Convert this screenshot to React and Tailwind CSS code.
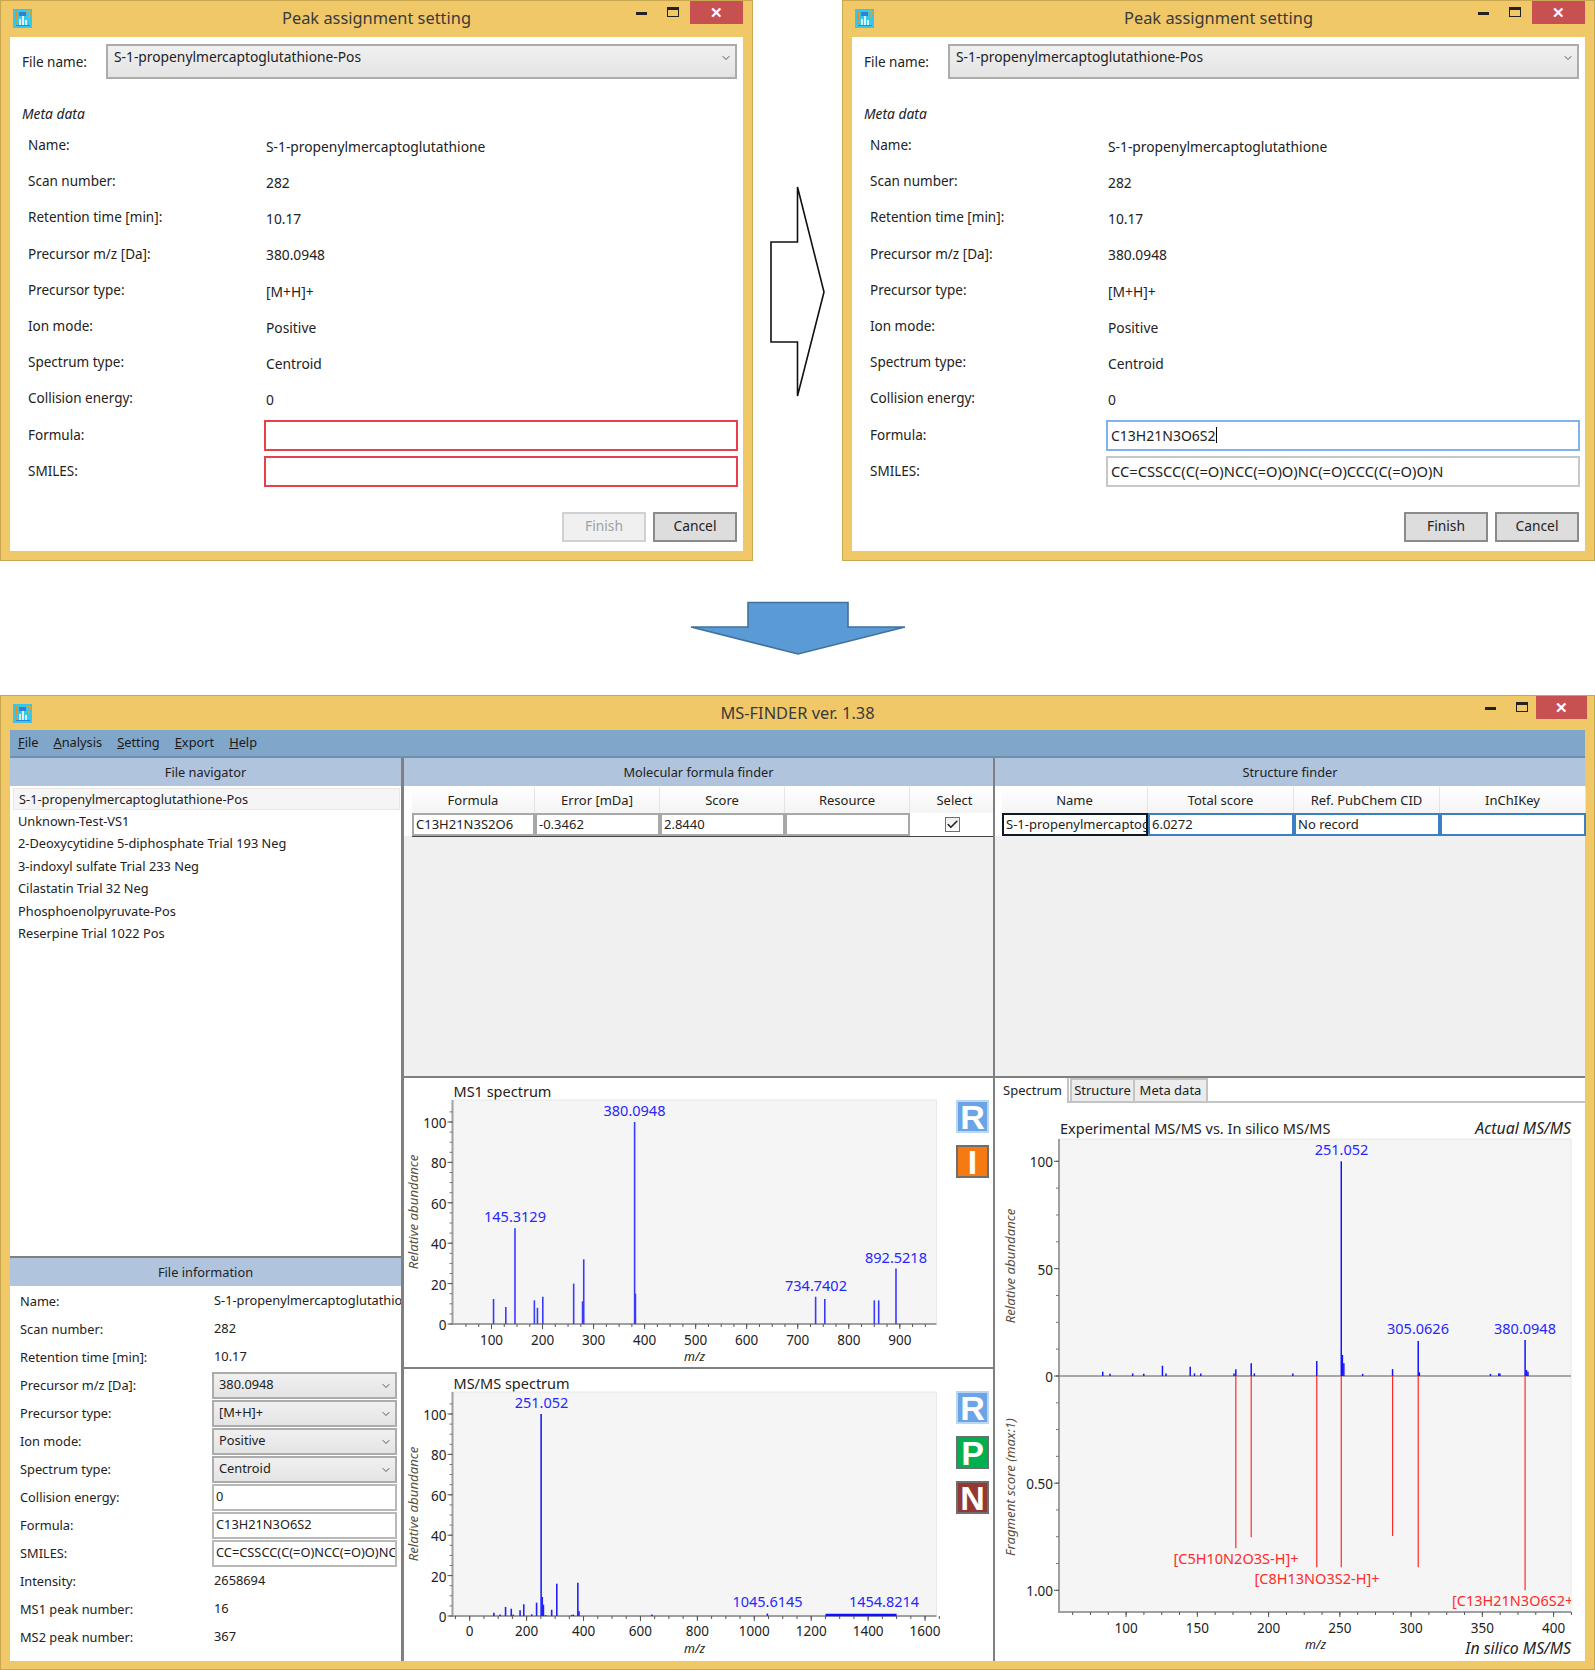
import { Check, ChevronDown } from "lucide-react";

const range = (from, to, step) => {
  const out = [];
  for (let v = from; v <= to + 1e-6; v += step) out.push(v);
  return out;
};

const MS1_PEAKS = [
  [104, 12.4], [128, 8.4], [146, 47.4], [184, 11.7], [190, 8], [200.5, 13.5], [261, 20], [278.4, 11.2],
  [280.7, 32], [380.4, 100], [382, 15], [735, 13.5], [753, 12.4], [850, 11.7], [858.6, 11.7], [892.5, 27.5],
];

const MS2_PEAKS = [
  [85, 1.6], [107, 0.7], [126, 4.5], [146, 3.6], [153, 0.7], [177, 2.8], [190, 5.8], [218, 0.8], [235, 6.6],
  [251, 100], [255, 9.4], [259, 5.6], [267, 0.4], [288, 3.1], [306, 16], [358, 0.5], [364, 0.7], [380, 16.4],
  [384, 2.3], [640, 0.7], [1046, 1.2],
];

const ACTUAL_PEAKS = [
  [83.6, 2], [88.7, 1], [104.6, 1.2], [112.4, 1], [125.5, 4.8], [128, 1.2], [145, 4.3], [148, 1.2], [152.4, 1.2],
  [175.7, 1.2], [177, 3.2], [187.8, 5.9], [190, 1.2], [217, 1.2], [233.8, 7], [251, 100], [251.8, 9.8], [252.8, 5.9],
  [266, 1], [287, 3.2], [305, 16.3], [305.8, 1.7], [355.7, 1], [361.5, 1.2], [362.3, 1.2], [380, 16.8], [381, 2.8], [382, 2],
];

const INSILICO_PEAKS = [
  [177, 0.804], [187.8, 0.753], [233.8, 0.893], [251, 0.893], [287, 0.747], [305, 0.893], [380, 1],
];

const META = [
  ["Name:", "S-1-propenylmercaptoglutathione"],
  ["Scan number:", "282"],
  ["Retention time [min]:", "10.17"],
  ["Precursor m/z [Da]:", "380.0948"],
  ["Precursor type:", "[M+H]+"],
  ["Ion mode:", "Positive"],
  ["Spectrum type:", "Centroid"],
  ["Collision energy:", "0"],
];

const FILES = [
  "S-1-propenylmercaptoglutathione-Pos",
  "Unknown-Test-VS1",
  "2-Deoxycytidine 5-diphosphate Trial 193 Neg",
  "3-indoxyl sulfate Trial 233 Neg",
  "Cilastatin Trial 32 Neg",
  "Phosphoenolpyruvate-Pos",
  "Reserpine Trial 1022 Pos",
];

function AppIcon() {
  return (
    <svg width="19" height="19" viewBox="0 0 19 19" className="shrink-0">
      <rect width="19" height="19" fill="#35c8ea" />
      <rect x="6" y="3" width="7" height="4" fill="#2f80d8" />
      <rect x="6" y="10" width="2" height="6" fill="#d8f4fb" />
      <rect x="9" y="7" width="2" height="9" fill="#d8f4fb" />
      <rect x="12" y="11" width="2" height="5" fill="#d8f4fb" />
      <rect x="2" y="2" width="2" height="9" fill="#f08a1c" />
      <rect x="2" y="13" width="2" height="2" fill="#f08a1c" />
      <path d="M14 4 Q14 2 16 2 Q18 3 17 5 L16 7 V9" fill="none" stroke="#f0a01c" strokeWidth="1.4" />
      <rect x="3" y="16" width="14" height="1" fill="#2f80d8" />
    </svg>
  );
}

function TitleBar({ title, height, main }) {
  return (
    <div className={`grid grid-cols-[1fr_auto_1fr] items-start shrink-0 ${height}`}>
      <div className="pl-3 pt-2">
        <AppIcon />
      </div>
      <div className="pt-[5px] text-[16.4px] leading-[24px] text-[#3a3a3a] whitespace-nowrap">{title}</div>
      <div className={`flex justify-end items-start ${main ? "pr-[7px]" : "pr-[9px]"}`}>
        <div className="w-[14px] h-[24px] flex items-center">
          <div className="w-[11px] h-[3px] bg-[#222]" />
        </div>
        <div className="w-[30px] h-[22px] flex justify-end pt-[6px] pr-[1px]">
          <div className="w-[12px] h-[10px] border border-[#222] border-t-[3px]" />
        </div>
        <div
          className={`h-[23px] bg-[#c75050] flex items-center justify-center text-white text-[15px] font-bold leading-none ${
            main ? "w-[51px] ml-[7px]" : "w-[53px] ml-[10px]"
          }`}
        >
          ✕
        </div>
      </div>
    </div>
  );
}

function Combo({ value, className }) {
  return (
    <div className={`flex justify-between items-start border-2 border-[#acacac] bg-gradient-to-b from-[#f0f0f0] to-[#e4e4e4] text-[#222] ${className}`}>
      <span className="translate-y-[1px]">{value}</span>
      <ChevronDown size={12} strokeWidth={2} className="text-[#555] mt-[6px]" />
    </div>
  );
}

function Dialog({ filled }) {
  return (
    <div className="w-[753px] h-[561px] flex flex-col bg-[#f0c868] border border-[#c9a650]">
      <TitleBar title="Peak assignment setting" height="h-[36px]" />
      <div className="mx-[9px] h-[514px] bg-white text-[13.8px] text-[#222]">
        <div className="flex items-center pt-[7px] pl-[12px] pr-[6px]">
          <span className="w-[84px] shrink-0 text-[13.5px] translate-y-[1px]">File name:</span>
          <Combo value="S-1-propenylmercaptoglutathione-Pos" className="flex-1 h-[35px] pl-[6px] pr-[3px]" />
        </div>
        <div className="mt-[24px] pl-[12px] h-[22px] leading-[22px] italic">Meta data</div>
        <div className="mt-[2px]">
          {META.map(([label, value]) => (
            <div key={label} className="grid grid-cols-[238px_1fr] h-[36.2px] items-center pl-[18px]">
              <span className="text-[13.5px]">{label}</span>
              <span className="translate-y-[2px]">{value}</span>
            </div>
          ))}
        </div>
        <div className="grid grid-cols-[236px_1fr] pl-[18px] pr-[5px] gap-y-[5px] items-center text-[13.5px] mt-[3px]">
          <span>Formula:</span>
          <div
            className={`h-[31px] flex items-center pl-[3px] text-[14px] ${filled ? "border-2 border-[#7eb4ea]" : "border-2 border-[#e8404a]"}`}
          >
            {filled && (
              <>
                <span>C13H21N3O6S2</span>
                <span className="w-[1px] h-[16px] bg-black" />
              </>
            )}
          </div>
          <span>SMILES:</span>
          <div
            className={`h-[31px] flex items-center pl-[3px] text-[14.7px] ${filled ? "border-2 border-[#c8c8c8]" : "border-2 border-[#e8404a]"}`}
          >
            {filled && "CC=CSSCC(C(=O)NCC(=O)O)NC(=O)CCC(C(=O)O)N"}
          </div>
        </div>
        <div className="flex justify-end gap-[7px] pr-[6px] mt-[25px]">
          <div
            className={`w-[84px] h-[30px] flex items-center justify-center border-2 ${
              filled ? "border-[#8a8a8a] bg-[#dddddd]" : "border-[#d0d0d0] bg-[#f0f0f0] text-[#a0a0a0]"
            }`}
          >
            Finish
          </div>
          <div className="w-[84px] h-[30px] flex items-center justify-center border-2 border-[#8a8a8a] bg-[#dddddd]">
            Cancel
          </div>
        </div>
      </div>
    </div>
  );
}

function PanelHeader({ children }) {
  return (
    <div className="h-[28px] shrink-0 flex items-center justify-center pt-[2px] bg-[#b0c4de] text-[12.8px] text-[#222]">
      {children}
    </div>
  );
}

function Cell({ children, border = "border-[#a8a8a8]", className = "" }) {
  return (
    <div className={`h-[23px] flex items-center pl-[2px] overflow-hidden whitespace-nowrap bg-white border-2 ${border} ${className}`}>
      {children}
    </div>
  );
}

function HeadCell({ children, className = "" }) {
  return (
    <div className={`h-[26px] flex items-center justify-center pt-[2px] bg-gradient-to-b from-white to-[#f4f4f4] border-r border-[#e4e4e4] ${className}`}>
      {children}
    </div>
  );
}

function Plot({ l, r, t, b, xOf, yTicks, yMinor, xTicks, xMinor, xLabelY, yLabelFmt = String }) {
  return (
    <g>
      <rect x={l} y={t} width={r - l} height={b - t} fill="#f5f5f5" stroke="#e8e8e8" />
      <path d={`M${l} ${t} V${b} H${r}`} fill="none" stroke="#a0a0a0" strokeWidth="2" />
      {xMinor.map((m) => (
        <line key={m} x1={xOf(m)} x2={xOf(m)} y1={b} y2={b + 3} stroke="#555" />
      ))}
      {xTicks.map((m) => (
        <g key={m}>
          <line x1={xOf(m)} x2={xOf(m)} y1={b} y2={b + 5} stroke="#555" />
          <text x={xOf(m)} y={xLabelY} textAnchor="middle" fontSize="13.5" fill="#222">
            {m}
          </text>
        </g>
      ))}
      {yMinor.map((y) => (
        <line key={y} x1={l - 3} x2={l} y1={y} y2={y} stroke="#777" />
      ))}
      {yTicks.map(([label, y]) => (
        <g key={label}>
          <line x1={l - 5} x2={l} y1={y} y2={y} stroke="#555" />
          <text x={l - 6} y={y + 6} textAnchor="end" fontSize="13.5" fill="#222">
            {yLabelFmt(label)}
          </text>
        </g>
      ))}
    </g>
  );
}

function VLabel({ x, y, children }) {
  return (
    <text x={x} y={y} transform={`rotate(-90 ${x} ${y})`} textAnchor="middle" fontSize="13.2" fontStyle="italic" fill="#5a5040">
      {children}
    </text>
  );
}

function Peak({ label, x, y }) {
  return (
    <text x={x} y={y} textAnchor="middle" fontSize="14.5" fill="#2626ff">
      {label}
    </text>
  );
}

function Ms1Chart() {
  const l = 452.5, r = 936.5, t = 1100, b = 1324;
  const xOf = (m) => 491.5 + (m - 100) * 0.5104;
  const yOf = (v) => b - v * 2.02;
  return (
    <svg viewBox="404 1078 545 289" className="w-[545px] h-[289px] shrink-0">
      <text x="453.5" y="1097" fontSize="14.5" fill="#222">MS1 spectrum</text>
      <Plot
        l={l} r={r} t={t} b={b} xOf={xOf} xLabelY={1345}
        xTicks={range(100, 900, 100)}
        xMinor={range(50, 950, 25)}
        yTicks={range(0, 100, 20).map((v) => [v, yOf(v)])}
        yMinor={range(0, 105, 5).map(yOf)}
      />
      {MS1_PEAKS.map(([m, v]) => (
        <line key={m} x1={xOf(m)} x2={xOf(m)} y1={b} y2={yOf(v)} stroke="#3a3aff" strokeWidth="1.6" />
      ))}
      <Peak label="380.0948" x={634.5} y={1116} />
      <Peak label="145.3129" x={515} y={1222} />
      <Peak label="892.5218" x={896} y={1263} />
      <Peak label="734.7402" x={816} y={1291} />
      <text x="694.5" y="1361" textAnchor="middle" fontSize="12.5" fontStyle="italic" fill="#222">m/z</text>
      <VLabel x={418} y={1212}>Relative abundance</VLabel>
    </svg>
  );
}

function Ms2Chart() {
  const l = 452.5, r = 936.5, t = 1392, b = 1616;
  const xOf = (m) => 469.7 + m * 0.2846;
  const yOf = (v) => b - v * 2.02;
  return (
    <svg viewBox="404 1369 545 292" className="w-[545px] h-[292px] shrink-0">
      <text x="453.5" y="1389" fontSize="14.5" fill="#222">MS/MS spectrum</text>
      <Plot
        l={l} r={r} t={t} b={b} xOf={xOf} xLabelY={1636}
        xTicks={range(0, 1600, 200)}
        xMinor={range(-50, 1650, 50)}
        yTicks={range(0, 100, 20).map((v) => [v, yOf(v)])}
        yMinor={range(0, 105, 5).map(yOf)}
      />
      {MS2_PEAKS.map(([m, v]) => (
        <line key={m} x1={xOf(m)} x2={xOf(m)} y1={b} y2={yOf(v)} stroke="#2020ff" strokeWidth="1.6" />
      ))}
      <line x1={xOf(1250)} x2={xOf(1500)} y1={b - 1} y2={b - 1} stroke="#1010ff" strokeWidth="2.5" />
      <Peak label="251.052" x={541.5} y={1408} />
      <Peak label="1045.6145" x={767.5} y={1607} />
      <Peak label="1454.8214" x={884} y={1607} />
      <text x="694.5" y="1653" textAnchor="middle" fontSize="12.5" fontStyle="italic" fill="#222">m/z</text>
      <VLabel x={418} y={1504}>Relative abundance</VLabel>
    </svg>
  );
}

function MirrorChart() {
  const l = 1058, r = 1570, t = 1139, b = 1612;
  const xOf = (m) => 1125.1 + (m - 100) * 1.425;
  const zero = 1376;
  const upOf = (v) => zero - v * 2.147;
  const downOf = (v) => zero + v * 214.3;
  return (
    <svg viewBox="994 1103 591 558" className="w-[591px] h-[558px] block">
      <defs>
        <clipPath id="plot-clip">
          <rect x={l} y={t} width={r - l} height={b - t} />
        </clipPath>
      </defs>
      <text x="1059" y="1134" fontSize="14.5" fill="#222">Experimental MS/MS vs. In silico MS/MS</text>
      <text x="1570" y="1134" textAnchor="end" fontSize="15.8" fontStyle="italic" fill="#222">Actual MS/MS</text>
      <Plot
        l={l} r={r} t={t} b={b} xOf={xOf} xLabelY={1633}
        xTicks={range(100, 400, 50)}
        xMinor={range(62.5, 412.5, 12.5)}
        yTicks={[
          ["100", upOf(100)],
          ["50", upOf(50)],
          ["0", zero],
          ["0.50", downOf(0.5)],
          ["1.00", downOf(1)],
        ]}
        yMinor={[...range(0, 100, 12.5).map(upOf), ...range(0, 1, 0.125).map(downOf)]}
      />
      <line x1={l} x2={r} y1={zero} y2={zero} stroke="#8c8c8c" strokeWidth="1.5" />
      {ACTUAL_PEAKS.map(([m, v]) => (
        <line key={m} x1={xOf(m)} x2={xOf(m)} y1={zero} y2={upOf(v)} stroke="#1414ff" strokeWidth="1.5" />
      ))}
      {INSILICO_PEAKS.map(([m, v]) => (
        <line key={m} x1={xOf(m)} x2={xOf(m)} y1={zero} y2={downOf(v)} stroke="#ff2a2a" strokeWidth="1.2" />
      ))}
      <Peak label="251.052" x={1340.5} y={1155} />
      <Peak label="305.0626" x={1417} y={1334} />
      <Peak label="380.0948" x={1524} y={1334} />
      <g fontSize="14.5" fill="#ff2a2a" textAnchor="middle">
        <text x="1235" y="1564">[C5H10N2O3S-H]+</text>
        <text x="1316" y="1584">[C8H13NO3S2-H]+</text>
        <g clipPath="url(#plot-clip)">
          <text x="1451" y="1606" textAnchor="start">[C13H21N3O6S2+H]+</text>
        </g>
      </g>
      <text x="1314.5" y="1649" textAnchor="middle" fontSize="12.5" fontStyle="italic" fill="#222">m/z</text>
      <text x="1570" y="1654" textAnchor="end" fontSize="15.8" fontStyle="italic" fill="#222">In silico MS/MS</text>
      <VLabel x={1014} y={1266}>Relative abundance</VLabel>
      <VLabel x={1014} y={1487}>Fragment score (max:1)</VLabel>
    </svg>
  );
}

function LetterButton({ letter, className }) {
  return (
    <div className={`w-[33px] h-[33px] flex items-center justify-center border-2 text-white font-bold text-[34px] leading-none font-['Liberation_Sans',sans-serif] ${className}`}>
      {letter}
    </div>
  );
}

function FileInfoRow({ label, children }) {
  return (
    <div className="grid grid-cols-[192px_185px] h-[28px] items-center pl-[10px] text-[12.8px]">
      <span className="translate-y-[1px]">{label}</span>
      {children}
    </div>
  );
}

export default function App() {
  const fieldText = "h-[27px] pl-[2px] border-2 border-[#b8b8b8] bg-white flex items-center overflow-hidden whitespace-nowrap";
  const infoCombo = "h-[27px] pl-[5px] pr-[3px]";
  const val = "pl-[2px] whitespace-nowrap";

  return (
    <div className="w-[1595px] h-[1670px] bg-white font-['Noto_Sans',sans-serif] text-[#222] overflow-hidden">
      <div className="flex h-[561px]">
        <Dialog />
        <div className="w-[89px] pt-[185px] pl-[18px]">
          <svg width="54" height="214" viewBox="771 185 54 214" className="overflow-visible">
            <path d="M771 242 H797.5 V187 L824 292 L797.5 396 V342 H771 Z" fill="#fff" stroke="#111" strokeWidth="1.6" />
          </svg>
        </div>
        <Dialog filled />
      </div>

      <div className="h-[134px] flex justify-center pt-[40px]">
        <svg width="216" height="54" viewBox="689 601 216 54">
          <path d="M747 602.5 H847 V627 H904 L797 654 L690 627 H747 Z" fill="#5b9bd5" stroke="#41719c" strokeWidth="1.6" />
        </svg>
      </div>

      <div className="h-[975px] bg-[#f0c868] border border-[#c9a650] flex flex-col">
        <TitleBar title="MS-FINDER ver. 1.38" height="h-[34px]" main />
        <div className="mx-[9px] flex-1 flex flex-col mb-[8px] min-h-0">
          <div className="h-[28px] shrink-0 bg-[#80a6c9] border-b-2 border-[#6f8faf] flex items-center gap-[15px] pl-[8px] text-[12.8px] text-[#1a1a1a]">
            {["File", "Analysis", "Setting", "Export", "Help"].map((m) => (
              <span key={m}>
                <span className="underline">{m[0]}</span>
                {m.slice(1)}
              </span>
            ))}
          </div>
          <div className="flex-1 flex bg-white min-h-0">
            {/* LEFT */}
            <div className="w-[394px] flex flex-col border-r-[3px] border-[#808080] shrink-0 overflow-hidden">
              <PanelHeader>File navigator</PanelHeader>
              <div className="h-[470px] pt-[2px] pl-[3px] pr-[1px] text-[12.8px]">
                {FILES.map((f, i) => (
                  <div
                    key={f}
                    className={`h-[22.4px] flex items-center pl-[5px] whitespace-nowrap ${i === 0 ? "bg-[#f5f5f5] border border-[#e6e6e6]" : ""}`}
                  >
                    {f}
                  </div>
                ))}
              </div>
              <div className="h-[2px] bg-[#808080] shrink-0" />
              <PanelHeader>File information</PanelHeader>
              <div className="pt-[1px]">
                <FileInfoRow label="Name:">
                  <span className={val}>S-1-propenylmercaptoglutathione</span>
                </FileInfoRow>
                <FileInfoRow label="Scan number:">
                  <span className={val}>282</span>
                </FileInfoRow>
                <FileInfoRow label="Retention time [min]:">
                  <span className={val}>10.17</span>
                </FileInfoRow>
                <FileInfoRow label="Precursor m/z [Da]:">
                  <Combo value="380.0948" className={infoCombo} />
                </FileInfoRow>
                <FileInfoRow label="Precursor type:">
                  <Combo value="[M+H]+" className={infoCombo} />
                </FileInfoRow>
                <FileInfoRow label="Ion mode:">
                  <Combo value="Positive" className={infoCombo} />
                </FileInfoRow>
                <FileInfoRow label="Spectrum type:">
                  <Combo value="Centroid" className={infoCombo} />
                </FileInfoRow>
                <FileInfoRow label="Collision energy:">
                  <div className={fieldText}>0</div>
                </FileInfoRow>
                <FileInfoRow label="Formula:">
                  <div className={fieldText}>C13H21N3O6S2</div>
                </FileInfoRow>
                <FileInfoRow label="SMILES:">
                  <div className={fieldText}>CC=CSSCC(C(=O)NCC(=O)O)NC(=O)CCC(C(=O)O)N</div>
                </FileInfoRow>
                <FileInfoRow label="Intensity:">
                  <span className={val}>2658694</span>
                </FileInfoRow>
                <FileInfoRow label="MS1 peak number:">
                  <span className={val}>16</span>
                </FileInfoRow>
                <FileInfoRow label="MS2 peak number:">
                  <span className={val}>367</span>
                </FileInfoRow>
              </div>
            </div>

            {/* MIDDLE */}
            <div className="w-[589px] flex flex-col shrink-0">
              <PanelHeader>Molecular formula finder</PanelHeader>
              <div className="h-[290px] bg-[#f0f0f0] text-[13px]">
                <div className="bg-white pl-[8px] pt-[1px]">
                  <div className="grid grid-cols-[123px_125px_125px_125px_90px]">
                    {["Formula", "Error [mDa]", "Score", "Resource", "Select"].map((h) => (
                      <HeadCell key={h}>{h}</HeadCell>
                    ))}
                    <Cell>C13H21N3S2O6</Cell>
                    <Cell>-0.3462</Cell>
                    <Cell>2.8440</Cell>
                    <Cell />
                    <div className="h-[23px] flex items-center justify-center pr-[6px]">
                      <div className="w-[15px] h-[15px] border border-[#707070] flex items-center justify-center bg-gradient-to-b from-[#eee] to-white">
                        <Check size={13} strokeWidth={3} className="text-[#222]" />
                      </div>
                    </div>
                  </div>
                </div>
                <div className="h-[1px] ml-[8px] bg-[#444]" />
              </div>
              <div className="h-[2px] bg-[#808080]" />
              <div className="h-[289px] flex bg-white">
                <Ms1Chart />
                <div className="flex flex-col gap-[12px] pt-[22px] pl-[7px]">
                  <LetterButton letter="R" className="bg-[#6aa4e6] border-[#bcd6f2]" />
                  <LetterButton letter="I" className="bg-[#f47a11] border-[#6e6e6e]" />
                </div>
              </div>
              <div className="h-[2px] bg-[#808080]" />
              <div className="flex-1 flex bg-white">
                <Ms2Chart />
                <div className="flex flex-col gap-[12px] pt-[22px] pl-[7px]">
                  <LetterButton letter="R" className="bg-[#6aa4e6] border-[#bcd6f2]" />
                  <LetterButton letter="P" className="bg-[#00b050] border-[#6e6e6e]" />
                  <LetterButton letter="N" className="bg-[#953735] border-[#6e6e6e]" />
                </div>
              </div>
            </div>

            {/* RIGHT */}
            <div className="flex-1 flex flex-col border-l-2 border-[#808080] min-w-0">
              <PanelHeader>Structure finder</PanelHeader>
              <div className="h-[290px] bg-[#f0f0f0] text-[13px]">
                <div className="bg-white pl-[7px] pt-[1px]">
                  <div className="grid grid-cols-[146px_146px_146px_146px]">
                    {["Name", "Total score", "Ref. PubChem CID", "InChIKey"].map((h) => (
                      <HeadCell key={h}>{h}</HeadCell>
                    ))}
                    <Cell border="border-[#101828]">S-1-propenylmercaptoglutathione</Cell>
                    <Cell border="border-[#3b7fc4]">6.0272</Cell>
                    <Cell border="border-[#3b7fc4]">No record</Cell>
                    <Cell border="border-[#3b7fc4]" />
                  </div>
                </div>
              </div>
              <div className="h-[2px] bg-[#808080]" />
              <div className="flex-1 bg-white overflow-hidden">
                <div className="h-[25px] flex items-end border-b-2 border-[#c4c4c4] text-[13px]">
                  <div className="w-[74px] h-[25px] flex items-center justify-center pl-[3px] bg-white border-r-2 border-[#c4c4c4] -mb-[2px]">Spectrum</div>
                  <div className="w-[65px] h-[23px] ml-[1px] flex items-center justify-center bg-[#ececec] border-2 border-b-0 border-[#c4c4c4]">Structure</div>
                  <div className="w-[73px] h-[23px] flex items-center justify-center bg-[#ececec] border-2 border-b-0 border-l-0 border-[#c4c4c4]">Meta data</div>
                </div>
                <MirrorChart />
              </div>
            </div>
          </div>
        </div>
      </div>
    </div>
  );
}
